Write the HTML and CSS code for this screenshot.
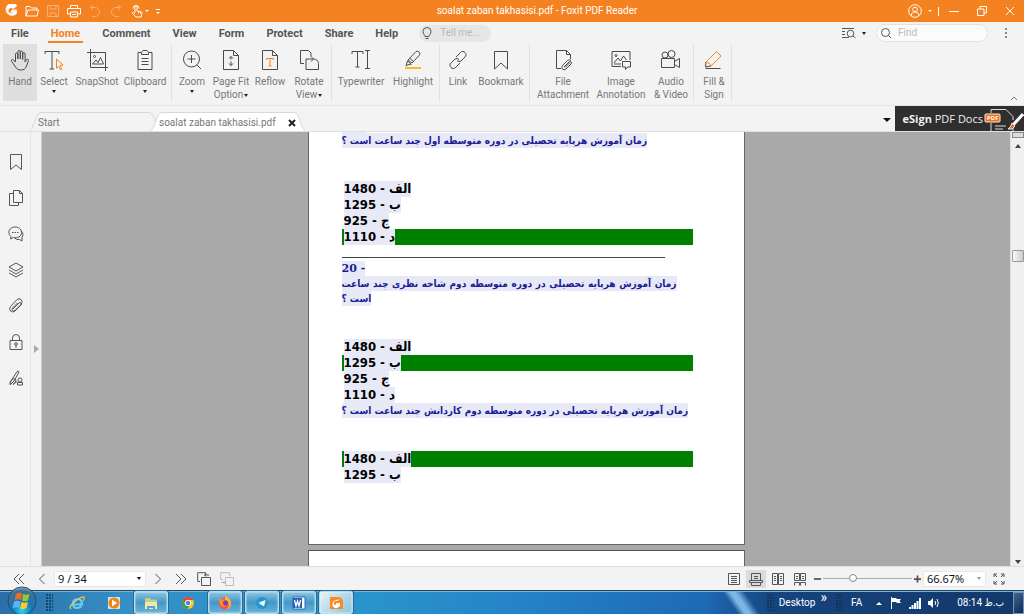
FILE: index.html
```html
<!DOCTYPE html>
<html lang="en">
<head>
<meta charset="utf-8">
<title>soalat zaban takhasisi.pdf - Foxit PDF Reader</title>
<link rel="stylesheet" href="styles.css">
</head>
<body>
<header class="titlebar">
  <div class="quick">
    <svg class="logo" viewBox="0 0 14 14"><path d="M12.6 1.4A6 6 0 1 0 12.4 9.500V6H8.200L7 8.400h2.700A3.100 3.100 0 1 1 9 4.200c1.700-.3 3-1.300 3.600-2.800z" fill="#fff"/></svg>
    <button aria-label="Open"><svg viewBox="0 0 14 14"><path d="M1 12V2.500h4l1.500 1.500H12V6M1 12 3 6h10.500L12 12z"/></svg></button>
    <button aria-label="Save" class="faded"><svg viewBox="0 0 14 14"><path d="M1.500 1.500h11v11h-11zM4 1.500V5h6V1.500M4 12.500V9h6v3.500"/></svg></button>
    <button aria-label="Print"><svg viewBox="0 0 14 14"><path d="M3.500 4.500v-3h7v3M3.500 10h-3V4.500h13V10h-3M3.500 8h7v5h-7zM5 10.500h4"/></svg></button>
    <button aria-label="Undo" class="faded"><svg viewBox="0 0 14 14"><path d="M5 1 2.500 3.500 5 6M2.500 3.500H7a4.400 4.400 0 0 1 0 9H4"/></svg></button>
    <button aria-label="Redo" class="faded"><svg viewBox="0 0 14 14"><path d="M9 1l2.500 2.500L9 6M11.500 3.500H7a4.400 4.400 0 0 0 0 9h3"/></svg></button>
    <button aria-label="Touch mode" class="touch"><svg viewBox="0 0 14 14"><path d="M5 8.500V3.200a1 1 0 0 1 2 0V7l4 .8c1 .3 1.200 1 1 1.700L11 13H6L2.500 9.500c-.6-.8.4-1.600 1.200-1L5 9.500M3 4.500a3 3 0 1 1 6 0M8.500 7.300v2M10.500 7.700v2"/></svg><i class="caret"></i></button>
    <button aria-label="Customize" class="custom"><i class="bar"></i><i class="caret"></i></button>
  </div>
  <div class="title">soalat zaban takhasisi.pdf - Foxit PDF Reader</div>
  <div class="wincontrols">
    <button aria-label="Account" class="account"><svg viewBox="0 0 14 14"><circle cx="7" cy="7" r="6.300"/><circle cx="7" cy="5.500" r="2.300"/><path d="M3.500 11.500v-1.500c.5-1.200 1.500-1.600 2.300-1.800h2.400c1 .2 1.900.8 2.300 1.800v1.500"/></svg><i class="caret"></i></button>
    <i class="divider"></i>
    <button aria-label="Minimize"><svg viewBox="0 0 14 14"><path d="M2 7.500h10"/></svg></button>
    <button aria-label="Restore"><svg viewBox="0 0 14 14"><path d="M2.500 5h6.500v6.500H2.500zM5 5V2.500h6.500V9H9"/></svg></button>
    <button aria-label="Close"><svg viewBox="0 0 14 14"><path d="m3 3 8 8M11 3l-8 8"/></svg></button>
  </div>
</header>

<nav class="menu">
  <div class="menuitems">
    <a href="#file">File</a><a href="#home" class="active">Home</a><a href="#comment">Comment</a><a href="#view">View</a><a href="#form">Form</a><a href="#protect">Protect</a><a href="#share">Share</a><a href="#help">Help</a>
  </div>
  <label class="tellme"><svg viewBox="0 0 14 14"><path d="M5 10.500c0-1.500-2-2.500-2-5a4 4 0 0 1 8 0c0 2.500-2 3.500-2 5zM5.500 12.500h3"/></svg><input type="text" placeholder="Tell me..." aria-label="Tell me"></label>
  <button class="findmode" aria-label="Search options"><svg viewBox="0 0 14 12"><path d="M0 1.500h12M0 4.500h3M0 7.500h3M0 10.500h7M11 9l2.500 2"/><circle cx="8.500" cy="6.500" r="3.300"/></svg><i class="caret"></i></button>
  <label class="find"><svg viewBox="0 0 12 12"><circle cx="5.500" cy="5.500" r="4"/><path d="m8.500 8.500 2.500 2.500"/></svg><input type="text" placeholder="Find" aria-label="Find"></label>
  <button class="more" aria-label="More"><i></i><i></i><i></i></button>
</nav>

<div class="ribbon">
  <div class="group first">
    <button class="tool w34 on"><svg viewBox="0 0 22 22"><path d="M6.500 13V5.200a1.200 1.200 0 0 1 2.400 0V10 2.700a1.200 1.200 0 0 1 2.400 0V10 3.200a1.200 1.200 0 0 1 2.400 0V10.500 5a1.200 1.200 0 0 1 2.400 0v8l1.200-2.200c.8-1.200 2.600-.6 2.200.8L17.500 17c-1 3-3 4-5.500 4-3 0-4.300-1-5.500-3L2.600 12.200c-.8-1.400.9-2.400 1.900-1.300z"/></svg><span>Hand</span></button>
    <button class="tool w34"><svg viewBox="0 0 22 22"><path d="M2 5V2.500h14V5M9 2.500V20M6.500 20H11"/><path class="o" d="m13.500 10 6.500 6-3 .5 2 3.500-1.500.7-1.800-3.300-2.200 1.800z"/></svg><span>Select</span><i class="caret"></i></button>
    <button class="tool w52"><svg viewBox="0 0 22 22"><path d="M4.500 0v18.500H22M1 3.500h18.500V22M6.500 15l3.500-4 2 2.500 2.500-5 3 6.500z"/><circle cx="8.500" cy="7.500" r="1"/></svg><span>SnapShot</span></button>
    <button class="tool w44"><svg viewBox="0 0 22 22"><path d="M7.500 3.500H4v17h14v-17h-3.500M7.500 5.500v-2L9 1.500h4l1.500 2v2zM7.500 9.500h7M7.500 12.500h7M7.500 15.500h7"/></svg><span>Clipboard</span><i class="caret"></i></button>
  </div>
  <div class="group">
    <button class="tool w34"><svg viewBox="0 0 22 22"><circle cx="10.500" cy="10" r="8"/><path d="M10.500 6v8M6.500 10h8M16 16l4 4"/></svg><span>Zoom</span><i class="caret"></i></button>
    <button class="tool w44"><svg viewBox="0 0 22 22"><path d="M3.500 1.500h10l5 5v14h-15zM13.500 1.500v5h5M11 7.500v3M11 12.500v4M9 9.500l2-2 2 2M9 14.500l2 2 2-2"/></svg><span>Page Fit<br>Option<i class="caret"></i></span></button>
    <button class="tool w34"><svg viewBox="0 0 22 22"><path d="M3.500 1.500h10l5 5v14h-15zM13.500 1.500v5h5"/><path class="o" d="M7.500 11V9.500h7V11M11 9.500V17M9.500 17h3"/></svg><span>Reflow</span></button>
    <button class="tool w44"><svg viewBox="0 0 22 22"><path d="M6 14.500H2.500v-13h8L13 4v3.500M8 10h7M8 10v10.500h12.500v-6M13 7.500l2.500 2.500L13 12.500M15.500 10c3 0 4.500 1.500 5 4.500"/></svg><span>Rotate<br>View<i class="caret"></i></span></button>
  </div>
  <div class="group">
    <button class="tool w52"><svg viewBox="0 0 22 22"><path d="M2 5V2.500h11V5M7.500 2.500V18M5.500 18h4M15 1.500h5M17.500 1.500v18M15 19.500h5"/></svg><span>Typewriter</span></button>
    <button class="tool w52"><svg viewBox="0 0 22 22"><path d="m6 11 8-8.500q1.500-1 3 .5t.5 3L10 14zM5 11.500l4.500 4M5.500 12 4 16.500l5-1.500M8 9.500l4 3.500"/><path class="y" d="M3 19h16"/></svg><span>Highlight</span></button>
  </div>
  <div class="group">
    <button class="tool w30"><svg viewBox="0 0 22 22"><path d="m9 8 4.500-4.500a3 3 0 0 1 4.500 0 3 3 0 0 1 0 4.500L14 12q-2 1.500-4-.5M13 14l-4.500 4.500a3 3 0 0 1-4.500 0 3 3 0 0 1 0-4.500L8 10q2-1.500 4 .5"/></svg><span>Link</span></button>
    <button class="tool w56"><svg viewBox="0 0 22 22"><path d="M4.500 2.500h13v17.500L11 14l-6.500 6z"/></svg><span>Bookmark</span></button>
  </div>
  <div class="group">
    <button class="tool w60"><svg viewBox="0 0 22 22"><path d="M9 19.500H4.500v-18h10l4 4V10M14.500 1.500v4h4"/><path d="m12 18 5-5q1-1 2 0t0 2l-5 5q-2 1.500-3.500 0t0-3.500l5-5q2-1.500 3.500 0M13 18.500l4.500-4.500"/></svg><span>File<br>Attachment</span></button>
    <button class="tool w56"><svg viewBox="0 0 22 22"><path d="M11 17.500H2v-15h18V11M4 14l4-5 2.500 3 3-5 3 4M4 15h7M12.500 12.500h8v5.500h-3l-2 2.500V18h-3z"/><circle cx="6" cy="6.500" r="1"/></svg><span>Image<br>Annotation</span></button>
    <button class="tool w44"><svg viewBox="0 0 22 22"><path d="M1.500 9.500h13v9h-13zM14.500 12.500l5-3v9l-5-3"/><circle cx="5" cy="6" r="3"/><circle cx="11.500" cy="5" r="3.500"/></svg><span>Audio<br>&amp; Video</span></button>
  </div>
  <div class="group">
    <button class="tool w34"><svg viewBox="0 0 22 22"><path d="m3 13-.5 5L8 17M2.500 19.500h15"/><path class="o" d="M3 13 13.500 2.500 18 7 8 17q-.5-3-5-4z"/></svg><span>Fill &amp;<br>Sign</span></button>
  </div>
  <button class="collapse" aria-label="Collapse ribbon"><svg viewBox="0 0 8 6"><path d="m1 5 3-3 3 3"/></svg></button>
</div>

<div class="tabs">
  <div class="tab start"><svg viewBox="0 0 130 19" preserveAspectRatio="none"><path d="M0 19C5 14 5 1 11 .5h108c6 .5 6 13.500 11 18.500" fill="#f3f3f3"/></svg><span>Start</span></div>
  <div class="tab doc"><svg viewBox="0 0 154 19" preserveAspectRatio="none"><path d="M0 19C5 14 5 1 11 .5h132c6 .5 6 13.500 11 18.500" fill="#fff"/></svg><span>soalat zaban takhasisi.pdf</span><button aria-label="Close tab"><svg viewBox="0 0 8 8"><path d="m1 1 6 6M7 1 1 7"/></svg></button></div>
  <button class="tablist" aria-label="Tab list"><i class="caret"></i></button>
  <a class="esign" href="#esign"><span><b>eSign</b> PDF Docs</span><svg viewBox="0 0 40 25"><path d="M7 7V3.500h15l7 7V14M7 17v8M11 20h11M11 23h8M29 20v5" fill="none" stroke="#ddd"/><rect x="1" y="8" width="15" height="8" rx="1" fill="#f36f0c"/><path d="M39 8 29 19" stroke="#fff" stroke-width="3"/><path d="m28 17 3 3-3 3h-4q3-2 4-6z" fill="#e86a17"/><text x="3" y="14">PDF</text></svg></a>
</div>

<main class="viewer">
  <aside class="side">
    <button aria-label="Bookmarks"><svg viewBox="0 0 16 16"><path d="M2.500.5h11v15L8 11l-5.500 4.500z"/></svg></button>
    <button aria-label="Pages"><svg viewBox="0 0 16 16"><path d="M5.500.5h6l3 3v9h-9zM11.500.5v3h3M5.500 3.500h-4v12h9v-3"/></svg></button>
    <button aria-label="Comments"><svg viewBox="0 0 16 16"><path d="M3 10.500 2.500 13l3-1.500c4 1 8-1 8-5S10 1 7 1 .8 3 .8 6.300q0 2.700 2.200 4.200zM13.500 5q3 3 .5 7v3l-2.500-1.500q-3 .5-5-1.500M4 6.500h1.500M6.500 6.500H8M9 6.500h1.500"/></svg></button>
    <button aria-label="Layers"><svg viewBox="0 0 16 16"><path d="m8 1 7 4-7 4-7-4zM1 8l7 4 7-4M1 11l7 4 7-4"/></svg></button>
    <button aria-label="Attachments"><svg viewBox="0 0 16 16"><path d="m5 11 6-6q1-1 2 0t0 2l-6 6q-2.500 2-4.500 0t0-4.500l6.500-7q2-1.500 4 0t.5 4.500L7 12.500q-1.500 1-2.500 0t0-2.500l5-5"/></svg></button>
    <button aria-label="Security"><svg viewBox="0 0 16 16"><path d="M2 6.500h12v9H2zM4.500 6.500V4a3.500 3.500 0 0 1 7 0v2.500M8 11v3"/><circle cx="8" cy="10" r="1.300"/></svg></button>
    <button aria-label="Signatures"><svg viewBox="0 0 16 16"><path d="M3 11 9 1.500q1.500-1 2 .5L6 11l-4 4 1-4M1.500 13.500q3-6 5.500-4.500t-2 5.500l4-3"/><circle cx="12" cy="10" r="2"/><path d="M9.500 12.500h5V15h-5z"/></svg></button>
  </aside>
  <button class="expander" aria-label="Expand panel"><i></i></button>
  <section class="canvas">
    <article class="page">
      <div class="sliver"></div>
      <p class="q oneline" dir="rtl"><mark>زمان آموزش هرپایه تحصیلی در دوره متوسطه اول چند ساعت است ؟</mark></p>
      <ul class="opts">
        <li><mark>1480 - الف</mark></li><li><mark>1295 - ب</mark></li><li><mark>925 - ج</mark></li><li class="green"><mark>1110 - د</mark></li>
      </ul>
      <hr>
      <p class="num"><mark>20 -</mark></p>
      <p class="q" dir="rtl"><mark>زمان آموزش هرپایه تحصیلی در دوره متوسطه دوم شاخه نظری چند ساعت است ؟</mark></p>
      <ul class="opts">
        <li><mark>1480 - الف</mark></li><li class="green"><mark>1295 - ب</mark></li><li><mark>925 - ج</mark></li><li><mark>1110 - د</mark></li>
      </ul>
      <p class="q oneline" dir="rtl"><mark>زمان آموزش هرپایه تحصیلی در دوره متوسطه دوم کاردانش چند ساعت است ؟</mark></p>
      <ul class="opts">
        <li class="green"><mark>1480 - الف</mark></li><li><mark>1295 - ب</mark></li>
      </ul>
    </article>
    <article class="page next"></article>
  </section>
  <div class="scroll"><i class="split"></i><i class="up"></i><i class="thumb"></i><i class="down"></i></div>
</main>

<footer class="status">
  <button aria-label="First page"><svg viewBox="0 0 14 14"><path d="M7 2 2 7l5 5M12 2 7 7l5 5"/></svg></button>
  <button aria-label="Previous page"><svg viewBox="0 0 14 14"><path d="M9.500 2 4.500 7l5 5"/></svg></button>
  <span class="selectbox pagebox"><select aria-label="Page"><option>9 / 34</option></select><i class="caret"></i></span>
  <button aria-label="Next page"><svg viewBox="0 0 14 14"><path d="m4.500 2 5 5-5 5"/></svg></button>
  <button aria-label="Last page"><svg viewBox="0 0 14 14"><path d="m2 2 5 5-5 5M7 2l5 5-5 5"/></svg></button>
  <button aria-label="Previous view"><svg viewBox="0 0 14 14"><path d="M3 9.500H.7V.7h8V3M4.500 5.500h9v8h-9zM12 3H7.500M9 1.500 7.500 3 9 4.500"/></svg></button>
  <button aria-label="Next view" class="dim"><svg viewBox="0 0 14 14"><path d="M3 7.500H.7V.7h9V4M5.500 5.500h8v8h-8zM1 10.500h4M3.500 9 5 10.500 3.500 12"/></svg></button>
  <div class="viewmodes">
    <button aria-label="Single page"><svg viewBox="0 0 14 14"><path d="M1.500 1.500h11v11h-11zM4 4.500h6M4 6.500h6M4 8.500h6M4 10.500h6"/></svg></button>
    <button aria-label="Continuous" class="on"><svg viewBox="0 0 14 14"><path d="M2.500 8.500V1.500h9v7M.5 8.500h13v2H.5zM2.500 10.500v3h9v-3M5 4.500h4M5 6.500h4"/></svg></button>
    <button aria-label="Facing"><svg viewBox="0 0 14 14"><path d="M1.500 1.500h5v11h-5zM7.500 1.500h5v11h-5zM3 4.500h2M3 6.500h2M3 8.500h2M9 4.500h2M9 6.500h2M9 8.500h2"/></svg></button>
    <button aria-label="Continuous facing"><svg viewBox="0 0 14 14"><path d="M1.500 1.500h5v7h-5zM7.500 1.500h5v7h-5zM1.500 13.500v-3h5v3M7.500 13.500v-3h5v3M3 4.500h2M3 6.500h2M9 4.500h2M9 6.500h2"/></svg></button>
  </div>
  <div class="zoomer">
    <button aria-label="Zoom out"><svg viewBox="0 0 8 8"><path d="M0 4h8"/></svg></button>
    <input type="range" min="0" max="100" value="32" aria-label="Zoom level">
    <button aria-label="Zoom in"><svg viewBox="0 0 8 8"><path d="M0 4h8M4 0v8"/></svg></button>
  </div>
  <span class="selectbox zoombox"><select aria-label="Zoom percent"><option>66.67%</option></select><i class="caret"></i></span>
  <button class="full" aria-label="Full screen"><svg viewBox="0 0 14 14"><path d="M2 5V2h3M2 2l3 3M9 2h3v3M12 2 9 5M2 9v3h3M2 12l3-3M12 9v3H9M12 12 9 9"/></svg></button>
</footer>

<div class="taskbar">
  <button class="startbtn" aria-label="Start"><svg viewBox="0 0 32 30"><defs><radialGradient id="orb" cx=".5" cy=".85" r=".9"><stop offset="0" stop-color="#22d5f5"/><stop offset=".4" stop-color="#1478b5"/><stop offset=".8" stop-color="#426f96"/><stop offset="1" stop-color="#b9d0df"/></radialGradient></defs><circle cx="16" cy="15" r="14" fill="url(#orb)" stroke="#234b72"/><path d="M10 8q3-2 6-.5L15 14q-3-1.500-6.500 0z" fill="#ef6a27"/><path d="M17 8q3 1.500 6.500 0L22 14.500q-3 1.500-6 0z" fill="#9bc72e"/><path d="M8 15.500q3-1.500 6.500 0L13 22q-3-1.500-6.500.5z" fill="#5fb5ef"/><path d="M15.500 16q3 1.500 6.500 0L20.500 22q-3 2-6.500.5z" fill="#fdc92c"/></svg></button>
  <i class="grip"></i>
  <div class="apps">
    <button aria-label="Internet Explorer"><svg viewBox="0 0 16 16"><path d="M3 9.500h10Q13 4 8.500 4T4 9q0 4 4 4 3 0 4.500-2" fill="none" stroke="#67cdf6" stroke-width="2.200"/><path d="M2 14Q-1 12 6 6.500T15 2q1 1-1 4" fill="none" stroke="#f0cb42" stroke-width="1.200"/></svg></button>
    <button aria-label="Media Player"><svg viewBox="0 0 16 16"><rect x="2" y="2" width="12" height="12" rx="1" fill="#d5e6ee"/><circle cx="8" cy="8" r="5.500" fill="#f18512"/><path d="m6 4.500 5 3.500-5 3.500z" fill="#fff"/></svg></button>
    <button aria-label="Explorer" class="open"><svg viewBox="0 0 16 16"><path d="M2 3h5l1 1.500h6V13H2z" fill="#e5c568"/><path d="M3 5h10v3H3z" fill="#9fd7a6"/><path d="M2 7h12v7H2z" fill="#f8e6a0"/><path d="M4 14v-3h8v3h-2v-1H6v1z" fill="#4ba7d8"/></svg></button>
    <button aria-label="Chrome"><svg viewBox="0 0 16 16"><circle cx="8" cy="8" r="6" fill="#fbc916"/><path d="M2.800 5A6 6 0 0 1 13.200 5H8L5.500 9.500z" fill="#e44134"/><path d="M2.800 5A6 6 0 0 0 7.500 14L10.500 9.500 5.500 9.500z" fill="#34a350"/><circle cx="8" cy="8" r="2.800" fill="#4384f2" stroke="#fff"/></svg></button>
    <button aria-label="Firefox" class="open"><svg viewBox="0 0 16 16"><circle cx="8" cy="8.500" r="6" fill="#ff4f3c"/><path d="M8 1q6 2 6 7.500t-6 6q5-2 3.500-6Q11 5 8 5z" fill="#ffb52e"/><path d="M2 4q2-1 3 .5h3Q6 6 7 8q1 1.500 3 .5-1 4-4.500 3T2 4z" fill="#ff8b22"/><circle cx="8.500" cy="8" r="2.500" fill="#7044bd"/></svg></button>
    <button aria-label="Telegram" class="open"><svg viewBox="0 0 16 16"><circle cx="8" cy="8" r="6" fill="#2595cf"/><path d="m4 8 7.500-3-1.500 6.500-2.500-2-1 1v-2z" fill="#fff"/></svg></button>
    <button aria-label="Word" class="open"><svg viewBox="0 0 16 16"><path d="M2 2h12v12H2z" fill="#fff" stroke="#3166b0"/><path d="M2 3h9v10H2z" fill="#2860b1"/><path d="m3.500 5 1.500 6 1.500-5L8 11l1.500-6" fill="none" stroke="#fff" stroke-width="1.300"/></svg></button>
    <button aria-label="Foxit" class="open cur"><svg viewBox="0 0 16 16"><path d="M2 2h10l3 3v9H2z" fill="#f98b1e"/><path d="M12 4q-1 2-4 2a2 2 0 1 0 1 3.500H7.500L8.500 8H12v3Q8 15 4.800 11.500 3 6.500 8 5q2-.2 4-1z" fill="#fff"/></svg></button>
  </div>
  <div class="tray">
    <i class="grip"></i><span class="desk">Desktop</span><span class="chev">»</span><i class="grip"></i><span class="lang">FA</span>
    <svg viewBox="0 0 8 8"><path d="m1 6 3-3 3 3z" fill="#fff"/></svg>
    <svg class="big" viewBox="0 0 12 12"><path d="M1 0h1v12H1zM2 1h4l1 1h4L9.500 4 11 6H7L6 5H2z" fill="#fff"/></svg>
    <svg class="big" viewBox="0 0 12 12"><path d="M0 10h2v2H0zM2.500 8h2v4h-2zM5 6h2v6H5zM7.500 4h2v8h-2zM10 1h2v11h-2z" fill="#fff"/></svg>
    <svg class="big" viewBox="0 0 12 12"><path d="M0 4h2l3-3v10L2 8H0z" fill="#fff"/><path d="M7 4q1.500 2 0 4M9 2q2.500 4 0 8" fill="none" stroke="#fff"/></svg>
    <span class="clock">08:14 ب.ظ</span>
    <button class="showdesk" aria-label="Show desktop"></button>
  </div>
</div>
</body>
</html>
```
FILE: styles.css
```css
* { box-sizing: border-box; }
body {
  margin: 0;
  height: 100vh;
  display: flex;
  flex-direction: column;
  overflow: hidden;
  font: 10px/12px Roboto, "DejaVu Sans Condensed", sans-serif;
  color: #777;
  background: #f3f3f3;
}
button { border: 0; padding: 0; margin: 0; background: none; font: inherit; color: inherit; display: flex; align-items: center; justify-content: center; }
a { color: inherit; text-decoration: none; }
svg { display: block; flex: none; width: 14px; height: 14px; fill: none; stroke: currentColor; }
input { border: 0; padding: 0; min-width: 0; background: none; font: inherit; color: #555; }
input::placeholder { color: #b8b8b8; opacity: 1; }
.caret { display: inline-block; flex: none; border: 3px solid transparent; border-top-color: currentColor; border-bottom: 0; }

/* title bar */
.titlebar { flex: none; height: 22px; background: #f58220; color: #fff; display: grid; grid-template-columns: 1fr auto 1fr; align-items: center; }
.quick { display: flex; align-items: center; gap: 7px; padding-left: 4px; }
.quick .faded { color: #f9b075; }
.quick .touch { gap: 1px; }
.quick .caret, .account .caret { border-width: 2px 2px 0; }
.quick .custom { flex-direction: column; gap: 2px; }
.bar { width: 4px; height: 1px; background: #fff; }
.title { padding-left: 50px; }
.wincontrols { display: flex; justify-content: flex-end; align-items: center; gap: 14px; padding-right: 7px; }
.account { gap: 6px; }
.wincontrols .divider { width: 1px; height: 9px; margin-left: -8px; margin-right: -6px; background: #fff; }

/* menu */
.menu { flex: none; height: 22px; display: flex; align-items: center; padding-right: 17px; color: #555; }
.menuitems { display: flex; gap: 16px; padding-left: 8px; font: bold 11px/15px Roboto, sans-serif; margin-right: 18px; }
.menuitems a { padding: 2px 3px 0; border-bottom: 2px solid transparent; }
.menuitems a.active { color: #f58220; border-color: #f58220; }
.tellme { display: flex; align-items: center; gap: 6px; width: 72px; height: 17px; padding-left: 1px; border-radius: 9px; background: #e6e6e6; }
.tellme input { width: 44px; }
.findmode { margin-left: auto; gap: 6px; }
.findmode .caret { border-width: 3px 2px 0; color: #222; }
.find { display: flex; align-items: center; gap: 6px; width: 112px; height: 18px; margin-left: 10px; padding-left: 3px; border: 1px solid #e2e2e2; border-radius: 9px; background: #fbfbfb; }
.find svg { width: 12px; height: 12px; }
.find input { width: 80px; }
.more { flex-direction: column; gap: 2px; margin-left: 17px; }
.more i { width: 2px; height: 2px; background: #888; }

/* ribbon */
.ribbon { flex: none; height: 62px; display: flex; border-bottom: 1px solid #e4e4e4; }
.group { display: flex; padding-left: 3px; margin-bottom: 3px; border-right: 1px solid #e2e2e2; }
.group.first { padding-right: 4px; }
.tool { flex-direction: column; justify-content: flex-start; padding-top: 5px; line-height: 13px; white-space: nowrap; height: 57px; }
.tool svg { width: 22px; height: 22px; margin-bottom: 4px; color: #4a4a4a; }
.tool.on { background: #dfdfdf; }
.tool .caret { color: #222; border-width: 3px 2px 0; margin-top: 2px; }
.tool span .caret { vertical-align: middle; margin: 0 0 0 1px; }
.o { stroke: #f58220; }
.y { stroke: #fbb829; stroke-width: 2; }
.w30 { width: 30px; } .w34 { width: 34px; } .w44 { width: 44px; } .w52 { width: 52px; } .w56 { width: 56px; } .w60 { width: 60px; }
.collapse { margin-left: auto; align-self: flex-end; padding: 0 6px 4px 0; }
.collapse svg { width: 8px; height: 6px; }

/* tabs */
.tabs { flex: none; height: 26px; display: flex; align-items: flex-end; padding-left: 30px; border-bottom: 1px solid #e0e0e0; }
.tab { position: relative; height: 19px; display: flex; align-items: center; padding: 2px 0 0 8px; }
.tab > svg { position: absolute; inset: 0; width: 100%; height: 100%; stroke: #d8d8d8; }
.tab span, .tab button { position: relative; }
.tab.start { width: 130px; }
.tab.doc { width: 154px; margin-left: -9px; justify-content: space-between; padding-right: 9px; }
.tab button svg { width: 8px; height: 8px; stroke-width: 2; color: #222; }
.tablist { margin-left: auto; padding: 0 4px; height: 22px; color: #111; }
.tablist .caret { border-width: 4px 4px 0; }
.esign { display: flex; align-items: center; gap: 1px; height: 25px; padding-left: 8px; background: #2f2f2f; color: #eee; font: 11px/14px "Open Sans", sans-serif; }
.esign svg { width: 40px; height: 25px; }
.esign text { font: bold 6px "Open Sans", sans-serif; fill: #fff; stroke: none; }

/* viewer */
.viewer { flex: 1; min-height: 0; display: flex; border-bottom: 1px solid #dedede; }
.side { width: 31px; padding: 22px 0 0 2px; display: flex; flex-direction: column; align-items: center; gap: 20px; border-right: 1px solid #e4e4e4; color: #555; }
.side svg { width: 16px; height: 16px; }
.expander { width: 11px; border-right: 1px solid #ccc; }
.expander i { border: 4px solid transparent; border-left: 5px solid #aaa; border-right: 0; }
.canvas { flex: 1; min-width: 0; overflow: hidden; background: #a9a9a9; }
.page { width: 437px; margin: 0 auto 5px; border: 1px solid #666; border-top: 0; background: #fff; color: #000; padding: 0 51px 61px 33px; }
.page.next { border-top: 1px solid #555; height: 60px; padding: 0; }
.page p, .page ul { margin: 0; padding: 0; list-style: none; }
mark { background: #e7eaf6; color: inherit; }
.sliver { width: 24px; height: 1px; background: #e7eaf6; }
.q { width: 335px; font: bold 10px/15px "DejaVu Sans Condensed", sans-serif; color: #1c1c95; text-align: justify; text-align-last: left; }
.q.oneline { width: auto; white-space: nowrap; }
.q mark { padding: 2px 0; }
.num mark { padding: 1px 0; }
.q + .opts { padding-top: 33px; }
.opts { font: bold 13px/16px "DejaVu Sans Condensed", sans-serif; }
.opts li { height: 16px; padding-left: 2px; }
.opts mark { display: inline-block; height: 16px; }
.opts .green { background: #008000; }
.page hr { width: 323px; margin: 12px 0 3px; border: 0; border-top: 1px solid #444; }
.num { font: bold 11px/15px "DejaVu Serif", serif; color: #1c1c95; }
.scroll { width: 14px; display: flex; flex-direction: column; align-items: center; background: #f0f0f0; border-left: 1px solid #ddd; }
.split { width: 12px; height: 6px; border: 1px solid #888; background: #ddd; }
.up { margin-top: 6px; border: 3px solid transparent; border-bottom: 4px solid #444; border-top: 0; }
.thumb { margin-top: 102px; width: 12px; height: 12px; border: 1px solid #999; border-radius: 1px; background: linear-gradient(90deg, #f8f8f8, #ccc); }
.down { margin-top: auto; margin-bottom: 2px; border: 3px solid transparent; border-top: 4px solid #444; border-bottom: 0; }

/* status bar */
.status { flex: none; height: 23px; display: flex; align-items: center; gap: 9px; padding: 0 18px 0 12px; color: #555; }
.selectbox { display: flex; align-items: center; background: #fff; border: 1px solid #e8e8e8; height: 16px; padding-right: 4px; color: #111; }
.selectbox select { appearance: none; flex: 1; border: 0; background: none; padding: 0 0 0 3px; color: inherit; font: 11px/14px "Noto Sans", sans-serif; }
.selectbox .caret { border-width: 3px 2px 0; }
.pagebox { width: 92px; margin-left: -4px; margin-right: -4px; }
.zoombox { width: 63px; margin-left: -7px; }
.zoombox .caret { color: #999; }
.status .dim { color: #bbb; }
.viewmodes { margin-left: auto; display: flex; gap: 2px; margin-right: -5px; }
.viewmodes button { width: 20px; height: 18px; }
.viewmodes .on { background: #dcdcdc; }
.zoomer { display: flex; align-items: center; gap: 2px; }
.zoomer svg { width: 7px; height: 8px; stroke-width: 2; }
.zoomer input { appearance: none; width: 89px; height: 10px; margin: 0; }
.zoomer input::-webkit-slider-runnable-track { height: 1px; background: #aaa; }
.zoomer input::-webkit-slider-thumb { appearance: none; width: 8px; height: 8px; margin-top: -4px; border: 1px solid #888; border-radius: 50%; background: #fff; }
.full { margin-left: -3px; }

/* taskbar */
.taskbar { flex: none; height: 24px; display: flex; align-items: center; border-top: 1px solid #26435a; box-shadow: inset 0 1px #79b3da; color: #fff; background: linear-gradient(90deg, #2a6fa9, #358fc4 12%, #2a93cb 36%, #2584c8 50%, #1d69b4 69%, #1b5ca2 71%, #16437c 76%, #12386b); }
.startbtn { width: 32px; margin-left: 6px; }
.startbtn svg { width: 32px; height: 30px; margin-top: -4px; stroke: none; }
.grip { width: 7px; height: 17px; opacity: .7; background: radial-gradient(circle at 1px 1px, #102f4c 1px, transparent 1px) 0 0 / 3px 3px; }
.startbtn + .grip { margin-left: 8px; }
.apps { display: flex; gap: 3px; margin-left: 7px; height: 23px; }
.apps button { width: 34px; border-radius: 2px; }
.apps svg { stroke: none; width: 16px; height: 16px; }
.apps .open { border: 1px solid #b6dcef; outline: 1px solid #286a98; background: linear-gradient(#8cc5e2, #4398c8 50%, #68b3d8); box-shadow: inset 0 0 2px #fff; }
.apps .cur { background: linear-gradient(135deg, #e3f2f9, #8bc5e0); }
.tray { margin-left: auto; height: 23px; display: flex; align-items: center; gap: 9px; background: linear-gradient(55deg, transparent 14px, #7bb7e5 20px 24px, transparent 32px); padding-left: 46px; }
.tray svg { width: 8px; height: 8px; stroke: none; }
.tray .big { width: 12px; height: 12px; margin-left: -2px; }
.desk { margin-left: -4px; }
.chev { margin-left: -4px; font-size: 14px; align-self: flex-start; }
.tray .lang { margin: 0 4px 0 -1px; }
.clock { margin-left: 8px; }
.showdesk { width: 11px; height: 22px; border: 1px solid #6e94bd; background: linear-gradient(135deg, #41658d, #0c2a55); }
```
